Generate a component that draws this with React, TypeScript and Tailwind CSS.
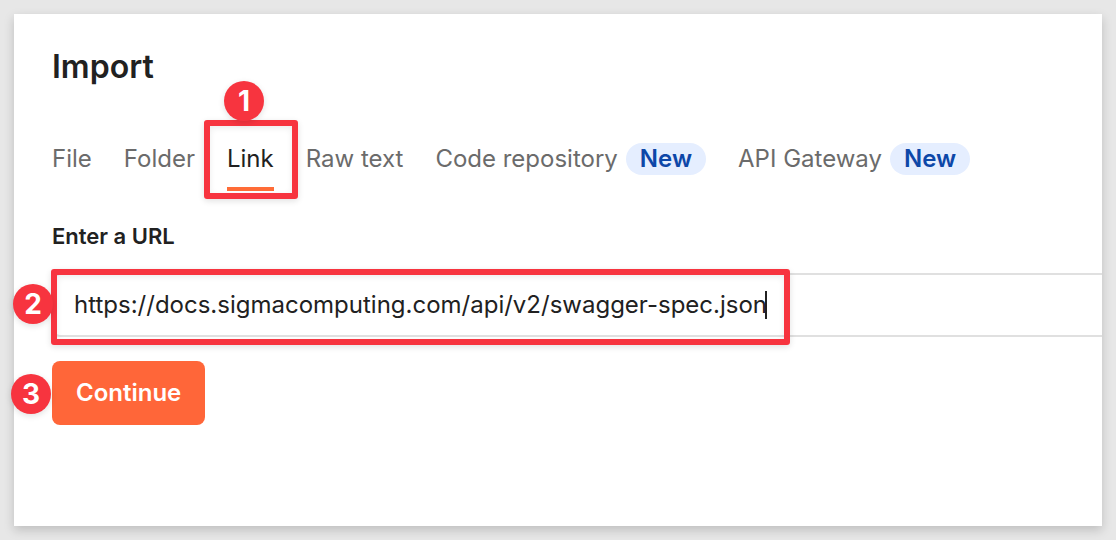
import { useState, type ReactNode } from "react";

const TABS = [
  { id: "file", label: "File" },
  { id: "folder", label: "Folder" },
  { id: "link", label: "Link" },
  { id: "raw", label: "Raw text" },
  { id: "repo", label: "Code repository", isNew: true },
  { id: "gateway", label: "API Gateway", isNew: true },
];

function StepNumber({ className, children }: { className: string; children: ReactNode }) {
  return (
    <span
      className={`pointer-events-none absolute z-20 flex size-10 items-center justify-center rounded-full bg-[#f7343f] text-[28px] leading-none font-bold text-white shadow-[0_2px_6px_rgba(0,0,0,0.12)] ${className}`}
    >
      {children}
    </span>
  );
}

function Highlight({ className }: { className: string }) {
  return (
    <span
      className={`pointer-events-none absolute z-10 rounded-[3px] border-6 border-[#f7343f] shadow-[0_2px_6px_rgba(0,0,0,0.12),inset_0_2px_6px_rgba(0,0,0,0.08)] ${className}`}
    />
  );
}

export default function App() {
  const [active, setActive] = useState("link");
  const [url, setUrl] = useState("https://docs.sigmacomputing.com/api/v2/swagger-spec.json");

  return (
    <div className="flex min-h-screen bg-[#e7e7e7] p-3.5 font-['Inter',sans-serif] text-[#212121]">
      <main className="min-w-0 flex-1 bg-white pt-[33px] pl-[38px] shadow-[0_4px_10px_rgba(0,0,0,0.18)]">
        <h1 className="text-[32px] leading-10 font-semibold">Import</h1>

        <div role="tablist" className="mt-10 flex gap-8 text-2xl leading-8 whitespace-nowrap">
          {TABS.map((tab) => (
            <div key={tab.id} className="relative">
              <button
                type="button"
                role="tab"
                aria-selected={active === tab.id}
                onClick={() => setActive(tab.id)}
                className={`flex h-16 items-center gap-2 border-y-4 border-t-transparent ${
                  active === tab.id ? "border-b-[#ff6c37] text-[#212121]" : "border-b-transparent text-[#6b6b6b]"
                }`}
              >
                {tab.label}
                {tab.isNew && (
                  <span className="rounded-full bg-[#e5eeff] px-3.5 font-semibold text-[#0d47a8]">New</span>
                )}
              </button>
              {tab.id === "link" && (
                <>
                  <Highlight className="-top-[7px] -right-6 -bottom-2 -left-[23px]" />
                  <StepNumber className="-top-[46px] -left-[3px]">1</StepNumber>
                </>
              )}
            </div>
          ))}
        </div>

        <label htmlFor="import-url" className="mt-[29px] block text-[22px] leading-8 font-semibold">
          Enter a URL
        </label>
        <div className="relative mt-[21px] flex h-16 items-center rounded-l-lg border-2 border-r-0 border-[#e0e0e0] pl-5">
          <input
            id="import-url"
            type="text"
            value={url}
            spellCheck={false}
            onChange={(e) => setUrl(e.target.value)}
            className="field-sizing-content text-2xl leading-8 outline-none"
          />
          <span className="-ml-0.5 h-7 w-0.5 bg-[#212121]" />
          <Highlight className="-top-1.5 -bottom-2.5 -left-[3px] w-[739px]" />
          <StepNumber className="top-[9px] -left-[41px]">2</StepNumber>
        </div>

        <div className="relative mt-6 flex">
          <button type="button" className="h-16 rounded-lg bg-[#ff6639] px-6 text-2xl font-semibold text-white">
            Continue
          </button>
          <StepNumber className="top-[13px] -left-[41px]">3</StepNumber>
        </div>
      </main>
    </div>
  );
}
